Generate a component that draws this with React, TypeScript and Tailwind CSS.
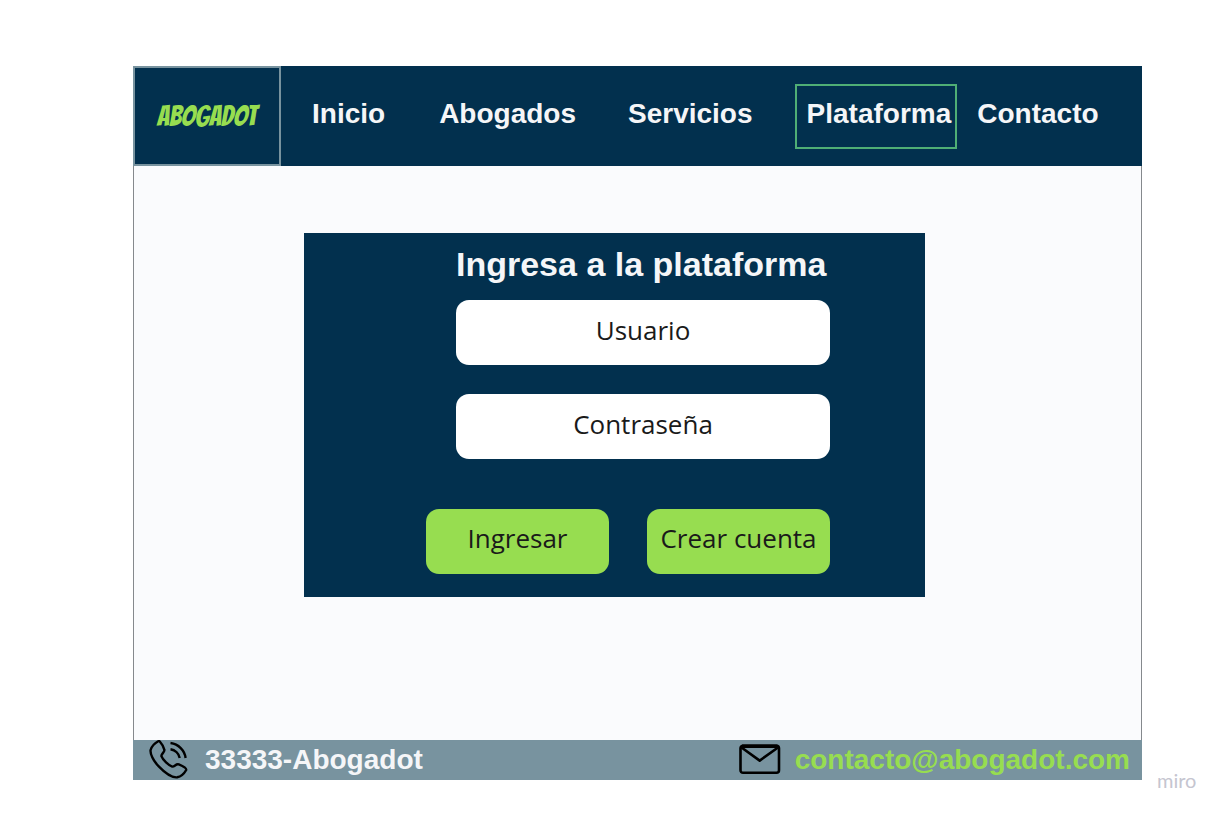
import React from "react";

function PhoneIcon() {
  return (
    <svg viewBox="0 0 40 40" className="h-10 w-10 shrink-0" fill="none" stroke="#000" strokeWidth="2.4" strokeLinejoin="round" aria-hidden="true">
      <path d="M9.2 1.3 C6.2 3 2.6 6.6 1.6 10 C1 13.5 3.8 20.3 10 26.7 C16 33 23.5 37.8 28.2 37.3 C32 36.6 35.5 33 37.2 30 C37.8 28.2 34 26.2 29.8 24.4 C26.8 23.4 25.8 26.9 23.2 26.6 C19.8 25.6 13.8 20 12.4 16.2 C12 13.8 15.8 12.4 15.4 9.8 C14.6 7 12.5 3.4 10.8 1.5 C10.3 1 9.8 1 9.2 1.3 Z" />
      <path d="M21.5 3 C29.5 4 35.8 10.5 36.6 18" />
      <path d="M21.5 9.3 C26 10 29.8 13.5 30.7 18" />
    </svg>
  );
}

function MailIcon() {
  return (
    <svg viewBox="0 0 42 32" className="h-8 w-[42px] shrink-0" fill="none" stroke="#000" strokeWidth="2.6" strokeLinejoin="round" aria-hidden="true">
      <rect x="1.5" y="1.8" width="38.5" height="27" rx="2.5" />
      <path d="M2.5 3.5 L20.7 16.6 L39 3.5" />
      <path d="M3 2.3 H38.5" strokeWidth="3.4" />
    </svg>
  );
}

const field =
  "ml-[30px] h-[65px] min-w-0 rounded-[13px] bg-white pb-1.5 text-center text-[26px] text-[#1a1a1a] outline-none placeholder:text-[#1a1a1a] placeholder:opacity-100";
const action =
  "h-[65px] min-w-0 flex-1 whitespace-nowrap rounded-[13px] bg-[#97dd50] pb-1.5 text-[26px] text-[#1a1a1a]";

export default function App() {
  return (
    <div className="grid min-h-screen grid-cols-[133px_minmax(0,1fr)_82px] bg-white pt-[66px] pb-[26px] font-['Open_Sans',sans-serif]">
      <div className="col-start-2 flex flex-col self-start">
        <header className="flex h-[100px] items-stretch bg-[#02304e] font-['Liberation_Sans',Arial,sans-serif]">
          <a
            href="#"
            className="flex w-[148px] shrink-0 items-center justify-center border-2 border-[#78939f] font-['Bangers','Liberation_Sans',sans-serif] text-[28px] text-[#97dd50]"
          >
            ABOGADOT
          </a>
          <nav className="flex flex-1 items-center pb-1 pl-[31px] text-[28px] font-bold leading-8 text-[#f5f6f8]">
            <a href="#inicio">Inicio</a>
            <a href="#abogados" className="ml-[54px]">Abogados</a>
            <a href="#servicios" className="ml-[52px]">Servicios</a>
            <a
              href="#plataforma"
              aria-current="page"
              className="ml-[42px] mt-1 flex h-[65px] items-center border-2 border-[#4fae75] pb-1 pl-2.5 pr-1"
            >
              Plataforma
            </a>
            <a href="#contacto" className="ml-5">Contacto</a>
          </nav>
        </header>

        <main className="border-x border-[#85898d] bg-[#fafbfd] pt-[67px] pr-[216px] pb-[143px] pl-[170px]">
          <form
            onSubmit={(event) => event.preventDefault()}
            className="flex flex-col bg-[#02304e] pt-[11px] pr-[95px] pb-[23px] pl-[122px]"
          >
            <h1 className="ml-[30px] whitespace-nowrap font-['Liberation_Sans',Arial,sans-serif] text-[34px] font-bold leading-10 text-[#f5f6f8]">
              Ingresa a la plataforma
            </h1>
            <input type="text" aria-label="Usuario" placeholder="Usuario" className={`mt-4 ${field}`} />
            <input type="password" aria-label="Contraseña" placeholder="Contraseña" className={`mt-[29px] ${field}`} />
            <div className="mt-[50px] flex gap-[38px]">
              <button type="submit" className={action}>Ingresar</button>
              <button type="button" className={action}>Crear cuenta</button>
            </div>
          </form>
        </main>

        <footer className="flex h-10 items-center justify-between bg-[#78939f] pr-3 pl-4 font-['Liberation_Sans',Arial,sans-serif] text-[28px] font-bold leading-8">
          <div className="flex items-center gap-4 text-[#f5f6f8]">
            <PhoneIcon />
            <span>33333-Abogadot</span>
          </div>
          <div className="flex items-center gap-3.5 text-[#97dd50]">
            <MailIcon />
            <a href="mailto:contacto@abogadot.com">contacto@abogadot.com</a>
          </div>
        </footer>
      </div>
      <span className="self-end pl-[15px] font-['Lato',sans-serif] text-[20px] leading-5 text-[#c5c5d0]">miro</span>
    </div>
  );
}
